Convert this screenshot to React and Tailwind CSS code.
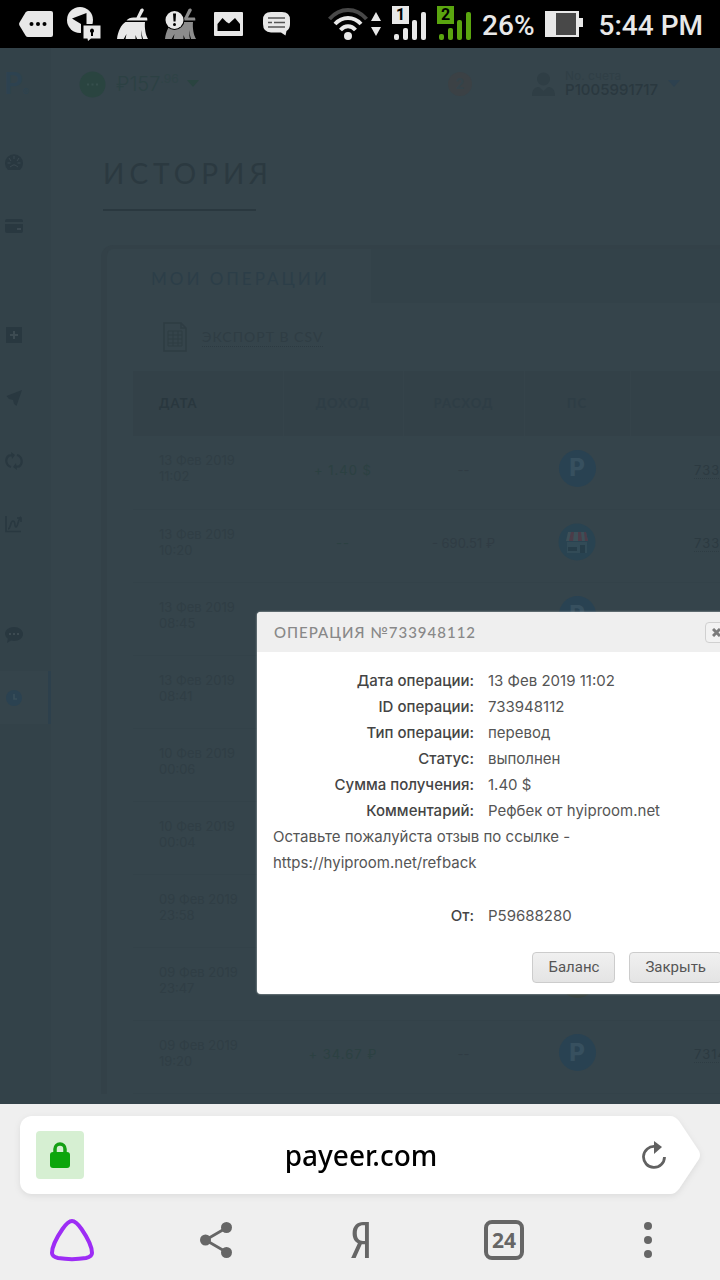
import React from 'react';
import { FaYandex } from 'react-icons/fa';

const rows = [
  { date: '13 Фев 2019', time: '11:02', income: '+ 1.40 $', expense: '--', ps: 'payeer', id: '733948112' },
  { date: '13 Фев 2019', time: '10:20', income: '--', expense: '- 690.51 ₽', ps: 'shop', id: '7339' },
  { date: '13 Фев 2019', time: '08:45', ps: 'payeer' },
  { date: '13 Фев 2019', time: '08:41' },
  { date: '10 Фев 2019', time: '00:06' },
  { date: '10 Фев 2019', time: '00:04' },
  { date: '09 Фев 2019', time: '23:58' },
  { date: '09 Фев 2019', time: '23:47', ps: 'other' },
  { date: '09 Фев 2019', time: '19:20', income: '+ 34.67 ₽', expense: '--', ps: 'payeer', id: '7314' },
];

const details = [
  { label: 'Дата операции:', value: '13 Фев 2019 11:02' },
  { label: 'ID операции:', value: '733948112' },
  { label: 'Тип операции:', value: 'перевод' },
  { label: 'Статус:', value: 'выполнен' },
  { label: 'Сумма получения:', value: '1.40 $' },
  { label: 'Комментарий:', value: 'Рефбек от hyiproom.net' },
];

const Broom = ({ color }) => (
  <g fill={color}>
    <path d="M24.500 1.200c1.500-1.800 4.200-.2 3 1.800L24 9.500h6c1 0 1.300.6 1.300 1.500v1.500H10.500c1.500-2 4-3 7-3h3z" />
    <path d="M9.500 14H29c-.6 6 .6 13 3 17h-5c-1-3-1.600-6-1.800-9 0 4 .3 7 .8 9h-5l-1.500-4V31H9.500l1-5-2.800 5H1C2 23 5 17 9.500 14z" />
  </g>
);

const Sim = ({ number, color }) => (
  <div className="relative h-9 w-[35px]">
    <svg viewBox="0 0 35 36" className="h-9 w-[35px]" fill={color}>
      <rect width="17" height="18" />
      <rect x="2" y="28" width="5" height="6" rx="2" />
      <rect x="11" y="22" width="5" height="12" rx="2" />
      <rect x="20" y="14" width="5" height="20" rx="2" />
      <rect x="29" y="6" width="5" height="28" rx="2" />
    </svg>
    <span className="absolute left-0 top-0 w-[17px] text-center text-base font-bold leading-[18px] text-black">{number}</span>
  </div>
);

const StatusBar = () => (
  <header className="flex h-12 shrink-0 items-center justify-between bg-black pl-3 pr-[17px] font-['Roboto','Noto_Sans',sans-serif] text-[28px] font-medium text-[#e8e8e8]">
    <div className="flex">
      <div className="flex w-12 items-center justify-center">
        <svg width="34" height="26" viewBox="0 0 34 26" fill="#e8e8e8">
          <path d="M9 0h23q2 0 2 2v22q0 2-2 2H9q-1.500 0-2.500-1.500L.5 14.500q-.8-1.500 0-3L6.500 1.500Q7.500 0 9 0z" />
          <g fill="#000"><circle cx="12.500" cy="13" r="2" /><circle cx="19" cy="13" r="2" /><circle cx="25.500" cy="13" r="2" /></g>
        </svg>
      </div>
      <div className="flex w-12 items-center justify-center">
        <svg width="34" height="34" viewBox="0 0 34 34">
          <circle cx="13" cy="13" r="13" fill="#e8e8e8" />
          <path d="M5 11.500L19.500 6v11.500H16V27h-2V17l-5-3z" fill="#000" />
          <rect x="15" y="17" width="19" height="17" fill="#000" />
          <path d="M16.500 18.500H33.500v13H24L21 34l-.5-2.500h-4z" fill="#e8e8e8" />
          <path d="M25 21.500a2.300 2.300 0 011 4.200V29h-2v-3.300a2.300 2.300 0 011-4.200z" fill="#000" />
        </svg>
      </div>
      <div className="flex w-12 items-center justify-center">
        <svg width="33" height="32" viewBox="0 0 33 32"><Broom color="#e8e8e8" /></svg>
      </div>
      <div className="flex w-12 items-center justify-center">
        <svg width="33" height="32" viewBox="0 0 33 32">
          <Broom color="#8c8c8c" />
          <circle cx="10.500" cy="12" r="10" fill="#000" />
          <circle cx="10.500" cy="12" r="9" fill="#e8e8e8" />
          <path d="M9 5.500h3l-.5 8h-2z" fill="#000" />
          <circle cx="10.500" cy="16.500" r="1.500" fill="#000" />
        </svg>
      </div>
      <div className="flex w-12 items-center justify-center">
        <svg width="29" height="24" viewBox="0 0 29 24">
          <rect width="29" height="24" rx="1" fill="#e8e8e8" />
          <path d="M3.500 19V12l5-6 4 4 2.500 1.500L21 6l5 6v7z" fill="#000" />
        </svg>
      </div>
      <div className="flex w-12 items-center justify-center">
        <svg width="27" height="24" viewBox="0 0 27 24">
          <path d="M8 0h11q8 0 8 8v4q0 5-3.500 7l-1 4.500L18 20.500H8Q0 20 0 12V8Q0 0 8 0z" fill="#e8e8e8" />
          <path d="M5 6h17M5 10.500h4M11 10.500h11M5 15h17" stroke="#555" strokeWidth="1.600" />
        </svg>
      </div>
    </div>
    <div className="flex items-center gap-2.5">
      <div className="flex items-center gap-0.5">
        <svg width="40" height="32" viewBox="0 0 40 32" fill="none" strokeWidth="4">
          <path d="M1.500 11C12-1 28-1 38.500 11" stroke="#484848" />
          <path d="M7 16c7.500-8 18.500-8 26 0" stroke="#e8e8e8" />
          <path d="M12.500 22c4.500-5 10.500-5 15 0" stroke="#e8e8e8" />
          <circle cx="20" cy="28" r="4" fill="#e8e8e8" />
        </svg>
        <svg width="12" height="24" viewBox="0 0 12 24" fill="#e8e8e8">
          <path d="M6 0l5 9H1zM6 24l5-9H1z" />
        </svg>
      </div>
      <Sim number="1" color="#e8e8e8" />
      <Sim number="2" color="#5aa50f" />
      <span className="pt-1">26%</span>
      <svg width="38" height="26" viewBox="0 0 38 26">
        <path d="M0 0h34v7h4v9h-4v10H0z" fill="#e8e8e8" />
        <rect x="11" y="2" width="20" height="22" fill="#484848" />
      </svg>
      <span className="pl-1.5 pt-1">5:44 PM</span>
    </div>
  </header>
);

const SideItem = ({ label, tall, active, children }) => (
  <a href="#" aria-label={label} className={`flex items-center ${tall ? 'h-16' : 'h-[63px]'}`}>
    <span className={`flex h-[53px] w-full items-center pl-[5px] ${active ? 'border-r-[3px] border-[#2d404c] bg-[#35444b]' : ''}`}>
      <svg width="18" height="18" viewBox="0 0 18 18" fill={active ? '#2b4251' : '#293840'}>{children}</svg>
    </span>
  </a>
);

const Sidebar = () => (
  <nav className="w-[51px] shrink-0 bg-[#334249]">
    <div className="flex h-[82px] items-center pb-3.5 pl-1">
      <span className="font-['Lato','Noto_Sans',sans-serif] text-3xl font-bold text-[#2d4250]">P</span>
      <span className="self-end pb-4 text-[10px] text-[#2d4250]">®</span>
    </div>
    <SideItem label="Обзор" tall>
      <path d="M3 17a9 9 0 1112 0z" />
      <path d="M9 3v3M4 5l2 3M14 5l-2 3M2.500 10h3M12.500 10h3M5 14l3-2h2l3 2" stroke="#3a4850" fill="none" />
    </SideItem>
    <SideItem label="Баланс" tall>
      <path d="M0 4q0-2 2-2h14q2 0 2 2v1H0zM0 7h18v7q0 2-2 2H2q-2 0-2-2z" />
      <path d="M12 12h4" stroke="#3a4850" strokeWidth="2" />
    </SideItem>
    <div className="pt-[45px]">
      <SideItem label="Пополнить">
        <path d="M1 1h16v16H1z" />
        <path d="M9 5v8M5 9h8" stroke="#3d4b52" strokeWidth="2" />
      </SideItem>
      <SideItem label="Перевести"><path d="M17 1L11.500 17 9 15 8 11l-4-1-2.500-3z" /></SideItem>
      <SideItem label="Обменять">
        <g fill="none" stroke="#293840" strokeWidth="2.200">
          <path d="M6 15A6.500 6.500 0 014 3.500L8 3.300M12 3a6.500 6.500 0 012 11.500l-4 .2" />
        </g>
        <path d="M6 0l4 3-3 4zM12 18l-4-3 3-4z" />
      </SideItem>
      <SideItem label="Торговля">
        <path d="M1 1v15.500h15M3 14c3 0 2-8 5-8s1 6 3 6 2-8 5-10M12 3h4v4" fill="none" stroke="#293840" strokeWidth="1.600" />
      </SideItem>
    </div>
    <div className="pt-12">
      <SideItem label="Сообщения">
        <path d="M9 1c5 0 9 3 9 7s-4 7-9 7l-3-.4L2 17l.8-4.200A7 7 0 010 8c0-4 4-7 9-7z" />
        <path d="M4 8h2M8 8h2M12 8h2" stroke="#3d4b52" strokeWidth="2" />
      </SideItem>
      <SideItem label="История" active>
        <circle cx="9" cy="9" r="8" />
        <path d="M9 5v5h3" fill="none" stroke="#3a4f5a" strokeWidth="1.600" />
      </SideItem>
    </div>
  </nav>
);

const Caret = ({ color }) => (
  <svg width="12" height="8" viewBox="0 0 12 8" fill={color}><path d="M0 0h12L6 7z" /></svg>
);

const AccountBar = () => (
  <div className="flex h-[72px] items-center justify-between pl-7 pr-10">
    <div className="flex items-center">
      <svg width="27" height="27" viewBox="0 0 27 27">
        <circle cx="13.500" cy="13.500" r="13" fill="#2a4440" />
        <path d="M8 13.500h2M12.500 13.500h2M17 13.500h2" stroke="#364f4d" strokeWidth="2" />
      </svg>
      <span className="pl-2.5 text-xl font-light text-[#2c4143]">₽157</span>
      <span className="pb-2.5 text-xs text-[#2f4346]">.96</span>
      <span className="pl-2"><Caret color="#2a4440" /></span>
    </div>
    <div className="flex items-center">
      <span className="mr-[60px] flex h-6 w-6 items-center justify-center rounded-full bg-[#3b4145] text-sm font-bold text-[#34434a]">2</span>
      <svg width="23" height="24" viewBox="0 0 23 24" fill="#2f3e45">
        <circle cx="11.500" cy="7" r="6.500" />
        <path d="M0 24c0-7 3-9 7-9l4.500 4 4.500-4c4 0 7 2 7 9z" />
      </svg>
      <div className="pl-2.5">
        <div className="text-xs leading-3 text-[#303f46]">No. счета</div>
        <div className="text-[15px] font-medium leading-4 text-[#2a383f]">P1005991717</div>
      </div>
      <span className="pl-2.5"><Caret color="#2d414f" /></span>
    </div>
  </div>
);

const PsIcon = ({ kind }) => {
  if (!kind) return null;
  if (kind === 'payeer') {
    return (
      <span className="mx-auto flex h-[37px] w-[37px] items-center justify-center rounded-full bg-[#294252] text-2xl font-extrabold text-[#37505f]">P</span>
    );
  }
  if (kind === 'other') return <span className="mx-auto block h-[37px] w-[37px] rounded-full bg-[#37423f]" />;
  return (
    <svg width="38" height="38" viewBox="0 0 38 38" className="mx-auto">
      <circle cx="19" cy="19" r="18.500" fill="#294351" />
      <path d="M10 9h18l2 9H8z" fill="#3d5058" />
      <path d="M13 9h3l-1 9h-4zM20 9h3l1 9h-4zM26 9h2l2 9h-3z" fill="#4b3c49" />
      <path d="M9 19h20v11H9z" fill="#324b57" />
      <path d="M10 24h9v4h-9zM22 22h5v8h-5z" fill="#263d49" />
    </svg>
  );
};

const History = () => (
  <section className="min-w-0 flex-1 overflow-hidden bg-[#35444b]">
    <AccountBar />
    <h1 className="ml-[52px] pt-8 font-['Lato','Noto_Sans',sans-serif] text-[28px] leading-[42px] tracking-[5px] text-[#2b3940]">ИСТОРИЯ</h1>
    <div className="ml-[52px] mt-[15px] h-0.5 w-[153px] bg-[#2a383f]" />
    <div className="ml-[50px] mt-[34px] w-[760px] rounded-tl-xl border-l-[6px] border-t-4 border-[#334148]">
      <div className="flex h-[54px] font-['Lato','Noto_Sans',sans-serif] text-[17px] tracking-[3px]">
        <h2 className="w-[264px] pl-11 leading-[60px] text-[#2c3e48]">МОИ ОПЕРАЦИИ</h2>
        <div className="flex-1 bg-[#334249]" />
      </div>
      <div className="flex h-[68px] items-center pl-14">
        <svg width="24" height="30" viewBox="0 0 24 30" fill="none" stroke="#2e3c43">
          <path d="M1 1h17l5 5v23H1zM18 1v5h5" strokeWidth="1.500" />
          <path d="M5 9h14v15H5zM5 13h14M5 17h14M5 21h14M10 9v15M15 9v15" />
        </svg>
        <a href="#" className="ml-[15px] border-b border-dotted border-[#2c3a41] font-['Lato','Noto_Sans',sans-serif] text-sm leading-[18px] tracking-[1px] text-[#2f3d44]">ЭКСПОРТ В CSV</a>
      </div>
      <table className="ml-[26px] w-[700px] table-fixed border-collapse text-[13px] text-[#303e45]">
        <thead>
          <tr className="h-[65px] bg-[#334148] font-['Lato','Noto_Sans',sans-serif] tracking-[1px] text-[#2e3d45]">
            <th className="w-[150px] pl-[26px] text-left text-[#29373e]">ДАТА</th>
            <th className="w-[120px] border-l border-[#35434a]">ДОХОД</th>
            <th className="w-[121px] border-l border-[#35434a]">РАСХОД</th>
            <th className="w-[106px] border-l border-[#35434a]">ПС</th>
            <th className="border-l border-[#35434a]" />
          </tr>
        </thead>
        <tbody>
          {rows.map((row) => (
            <tr key={row.date + row.time} className="h-[73px] border-b border-[#334249]">
              <td className="pb-2 pl-[26px] leading-4">
                {row.date}
                <br />
                {row.time}
              </td>
              <td className="pb-1 text-center tracking-[1px] text-[#2c4142]">{row.income}</td>
              <td className="pb-1 text-center text-[#303c44]">{row.expense}</td>
              <td className="pb-2">
                <PsIcon kind={row.ps} />
              </td>
              <td className="pb-1 pl-16 tracking-[1px]">
                {row.id && <a href="#" className="border-b border-dotted border-[#2e3c43] text-[#2c3a41]">{row.id}</a>}
              </td>
            </tr>
          ))}
        </tbody>
      </table>
    </div>
  </section>
);

const dialogButton =
  'h-[31px] rounded border border-[#cccccc] bg-linear-to-b from-[#f0f0f0] to-[#e4e4e4] px-[15px] font-[\'Roboto\',\'Noto_Sans\',sans-serif] text-[15px] text-[#555555]';

const OperationDialog = () => (
  <div role="dialog" aria-labelledby="operation-title" className="absolute left-[257px] top-[564px] w-[480px] overflow-hidden rounded bg-white text-[#555555] shadow-[0_0_2px_#c8d0d0]">
    <div className="flex h-10 items-center justify-between bg-[#efefef] pl-[17px] pr-2.5">
      <h2 id="operation-title" className="font-['Lato','Noto_Sans',sans-serif] text-[15px] font-medium tracking-[1px] text-[#888888]">ОПЕРАЦИЯ №733948112</h2>
      <button aria-label="Закрыть окно" className="flex h-[21px] w-[22px] items-center justify-center rounded border border-[#d0d0d0] bg-[#f2f2f2]">
        <svg width="9" height="9" viewBox="0 0 9 9" stroke="#7b7b7b" strokeWidth="3"><path d="M1 1l7 7M8 1L1 8" /></svg>
      </button>
    </div>
    <div className="px-4 pt-4 text-[15px] leading-[26px]">
      <dl>
        {details.map((item) => (
          <div key={item.label} className="flex gap-3.5">
            <dt className="w-[201px] text-right font-medium text-[#444444]">{item.label}</dt>
            <dd>{item.value}</dd>
          </div>
        ))}
      </dl>
      <p>Оставьте пожалуйста отзыв по ссылке -</p>
      <p>https://hyiproom.net/refback</p>
      <dl className="flex gap-3.5 pt-[27px]">
        <dt className="w-[201px] text-right font-medium text-[#444444]">От:</dt>
        <dd>P59688280</dd>
      </dl>
    </div>
    <div className="flex justify-end gap-3.5 pb-[11px] pr-[15px] pt-[23px]">
      <button className={dialogButton}>Баланс</button>
      <button className={dialogButton}>Закрыть</button>
    </div>
  </div>
);

const BrowserBar = () => (
  <footer className="shrink-0 bg-[#efefef] pt-3">
    <div className="mx-5 flex h-[78px] drop-shadow-[0_2px_3px_rgba(0,0,0,0.08)]">
      <div className="flex min-w-0 flex-1 items-center rounded-l-xl bg-white pl-4">
        <button aria-label="Защищённое соединение" className="flex h-12 w-12 shrink-0 items-center justify-center rounded bg-[#d6efd2]">
          <svg width="20" height="26" viewBox="0 0 20 26">
            <path d="M5 12V7a5 5 0 0110 0v5" fill="none" stroke="#14a014" strokeWidth="3.500" />
            <rect y="10" width="20" height="16" rx="3" fill="#0ca60c" />
          </svg>
        </button>
        <input aria-label="Адрес" defaultValue="payeer.com" className="min-w-0 flex-1 bg-transparent text-center font-['Noto_Sans',sans-serif] text-[28px] font-medium text-black outline-none" />
        <button aria-label="Обновить" className="flex h-12 w-8 shrink-0 items-center justify-center">
          <svg width="24" height="28" viewBox="0 0 24 28">
            <path d="M13 5.500A10.500 10.500 0 1022.500 16" fill="none" stroke="#616161" strokeWidth="2.800" />
            <path d="M12 0l8 6-8 7z" fill="#616161" />
          </svg>
        </button>
      </div>
      <svg width="30" height="78" viewBox="0 0 30 78" className="shrink-0">
        <path d="M0 0c4 0 6.500 2 9 5l20 30q2 4 0 8L9 73c-2.500 3-5 5-9 5z" fill="#fff" />
      </svg>
    </div>
    <nav className="mt-1.5 grid h-20 grid-cols-5 text-[#666666]">
      <button aria-label="Алиса" className="flex items-center justify-center">
        <svg width="46" height="44" viewBox="0 0 46 44" fill="none" stroke="#9d2cf5" strokeWidth="4">
          <path d="M23 3c3.500 0 6 3 9.500 8C38 19 43 28 43 35c0 3-2 4-6 5-8 1.300-20 1.300-28 0-4-1-6-2-6-5 0-7 5-16 10.500-24C17 6 19.500 3 23 3z" />
        </svg>
      </button>
      <button aria-label="Поделиться" className="flex items-center justify-center">
        <svg width="32" height="36" viewBox="0 0 32 36" fill="currentColor">
          <path d="M27 5.500L5.500 18 27 30.500" fill="none" stroke="currentColor" strokeWidth="2.800" />
          <circle cx="26.500" cy="5.500" r="5.500" />
          <circle cx="5.500" cy="18" r="5.500" />
          <circle cx="26.500" cy="30.500" r="5.500" />
        </svg>
      </button>
      <button aria-label="Яндекс" className="flex items-center justify-center">
        <FaYandex size={36} />
      </button>
      <button aria-label="Вкладки" className="flex items-center justify-center">
        <span className="flex h-10 w-10 items-center justify-center rounded-lg border-4 border-[#666666] font-['Open_Sans','Noto_Sans',sans-serif] text-[21px] font-bold leading-none">24</span>
      </button>
      <button aria-label="Меню" className="flex items-center justify-center">
        <svg width="8" height="36" viewBox="0 0 8 36" fill="currentColor">
          <circle cx="4" cy="4" r="4" />
          <circle cx="4" cy="18" r="4" />
          <circle cx="4" cy="32" r="4" />
        </svg>
      </button>
    </nav>
  </footer>
);

const App = () => (
  <div className="flex h-screen flex-col overflow-hidden font-['Inter','Noto_Sans',sans-serif]">
    <StatusBar />
    <main className="relative flex min-h-0 flex-1 overflow-hidden bg-[#35444b]">
      <Sidebar />
      <History />
      <OperationDialog />
    </main>
    <BrowserBar />
  </div>
);

export default App;
